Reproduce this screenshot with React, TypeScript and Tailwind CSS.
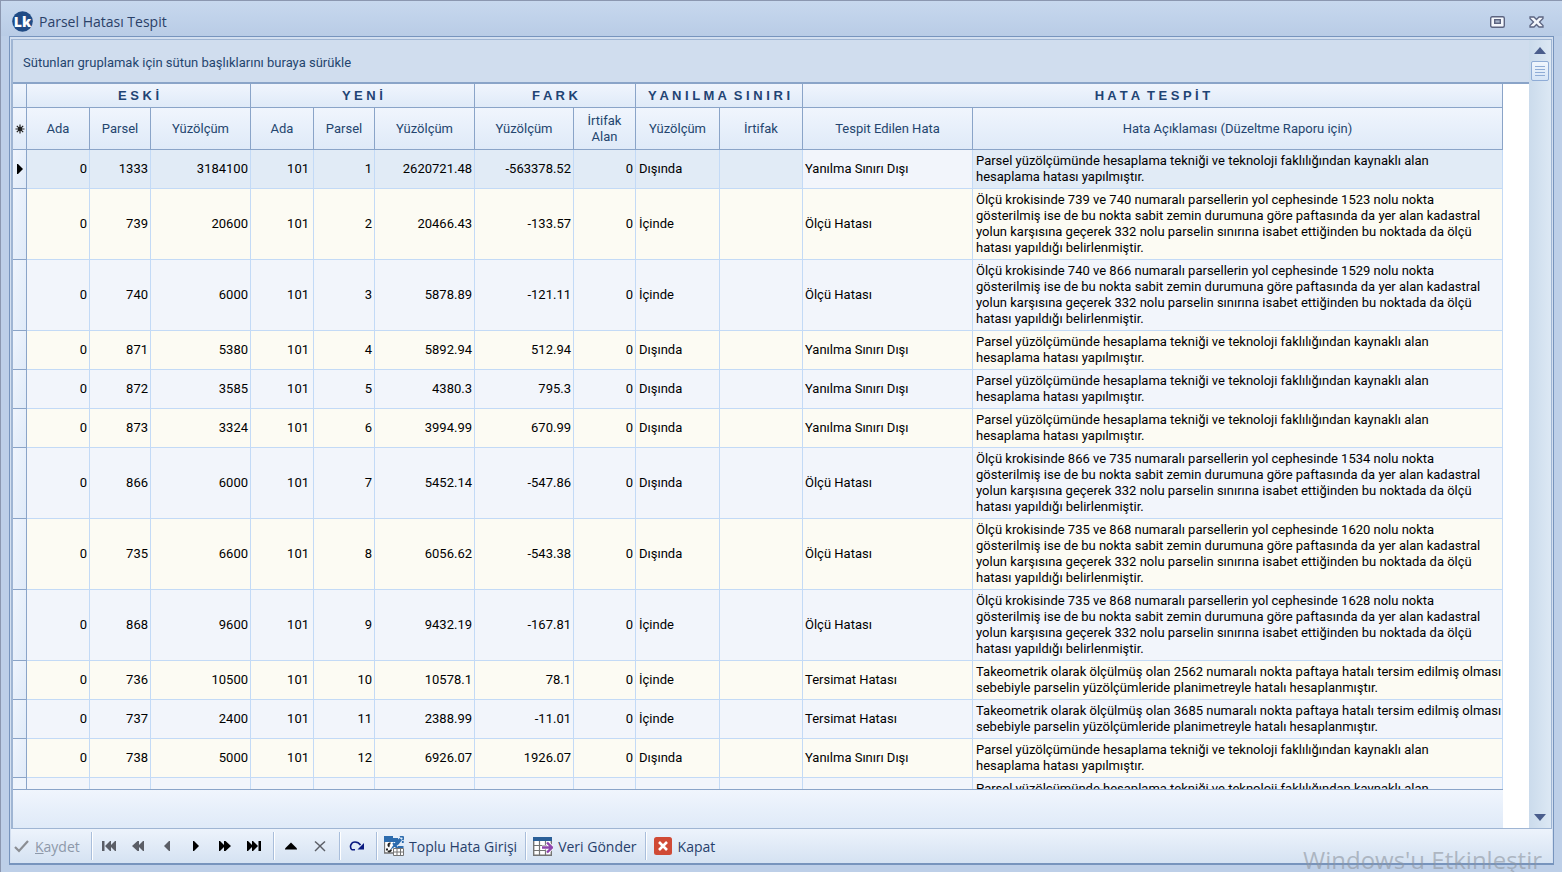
import type { ReactNode } from 'react'

type Row = {
  parsel: number
  alan: string
  yeniParsel: number
  yeniAlan: string
  fark: string
  sinir: string
  hata: string
  aciklama: string
}

const teknik =
  'Parsel yüzölçümünde hesaplama tekniği ve teknoloji faklılığından kaynaklı alan\nhesaplama hatası yapılmıştır.'

const olcu = (a: number, b: number, nokta: number) =>
  `Ölçü krokisinde ${a} ve ${b} numaralı parsellerin yol cephesinde ${nokta} nolu nokta\ngösterilmiş ise de bu nokta sabit zemin durumuna göre paftasında da yer alan kadastral\nyolun karşısına geçerek 332 nolu parselin sınırına isabet ettiğinden bu noktada da ölçü\nhatası yapıldığı belirlenmiştir.`

const tersimat = (nokta: number) =>
  `Takeometrik olarak ölçülmüş olan ${nokta} numaralı nokta paftaya hatalı tersim edilmiş olması\nsebebiyle parselin yüzölçümleride planimetreyle hatalı hesaplanmıştır.`

const rows: Row[] = [
  { parsel: 1333, alan: '3184100', yeniParsel: 1, yeniAlan: '2620721.48', fark: '-563378.52', sinir: 'Dışında', hata: 'Yanılma Sınırı Dışı', aciklama: teknik },
  { parsel: 739, alan: '20600', yeniParsel: 2, yeniAlan: '20466.43', fark: '-133.57', sinir: 'İçinde', hata: 'Ölçü Hatası', aciklama: olcu(739, 740, 1523) },
  { parsel: 740, alan: '6000', yeniParsel: 3, yeniAlan: '5878.89', fark: '-121.11', sinir: 'İçinde', hata: 'Ölçü Hatası', aciklama: olcu(740, 866, 1529) },
  { parsel: 871, alan: '5380', yeniParsel: 4, yeniAlan: '5892.94', fark: '512.94', sinir: 'Dışında', hata: 'Yanılma Sınırı Dışı', aciklama: teknik },
  { parsel: 872, alan: '3585', yeniParsel: 5, yeniAlan: '4380.3', fark: '795.3', sinir: 'Dışında', hata: 'Yanılma Sınırı Dışı', aciklama: teknik },
  { parsel: 873, alan: '3324', yeniParsel: 6, yeniAlan: '3994.99', fark: '670.99', sinir: 'Dışında', hata: 'Yanılma Sınırı Dışı', aciklama: teknik },
  { parsel: 866, alan: '6000', yeniParsel: 7, yeniAlan: '5452.14', fark: '-547.86', sinir: 'Dışında', hata: 'Ölçü Hatası', aciklama: olcu(866, 735, 1534) },
  { parsel: 735, alan: '6600', yeniParsel: 8, yeniAlan: '6056.62', fark: '-543.38', sinir: 'Dışında', hata: 'Ölçü Hatası', aciklama: olcu(735, 868, 1620) },
  { parsel: 868, alan: '9600', yeniParsel: 9, yeniAlan: '9432.19', fark: '-167.81', sinir: 'İçinde', hata: 'Ölçü Hatası', aciklama: olcu(735, 868, 1628) },
  { parsel: 736, alan: '10500', yeniParsel: 10, yeniAlan: '10578.1', fark: '78.1', sinir: 'İçinde', hata: 'Tersimat Hatası', aciklama: tersimat(2562) },
  { parsel: 737, alan: '2400', yeniParsel: 11, yeniAlan: '2388.99', fark: '-11.01', sinir: 'İçinde', hata: 'Tersimat Hatası', aciklama: tersimat(3685) },
  { parsel: 738, alan: '5000', yeniParsel: 12, yeniAlan: '6926.07', fark: '1926.07', sinir: 'Dışında', hata: 'Yanılma Sınırı Dışı', aciklama: teknik },
]

const columns = ['Ada', 'Parsel', 'Yüzölçüm', 'Ada', 'Parsel', 'Yüzölçüm', 'Yüzölçüm', 'İrtifak Alan', 'Yüzölçüm', 'İrtifak', 'Tespit Edilen Hata', 'Hata Açıklaması (Düzeltme Raporu için)']

const headCell = 'border-r border-b border-[#8aa4c8] bg-linear-to-b from-[#f0f5fd] to-[#dfeaf8]'
const cell = 'border-r border-b border-[#c3daf6]'

function Band({ span, children }: { span: number; children: ReactNode }) {
  return (
    <th colSpan={span} scope="colgroup" className={`${headCell} h-6 whitespace-pre text-[13px] leading-4 font-bold text-[#1f4474] [font-family:'Liberation_Sans',sans-serif]`}>
      {children}
    </th>
  )
}

function Grid() {
  return (
    <table className="w-full table-fixed border-separate border-spacing-0 text-[13px] leading-4 text-black">
      <colgroup>
        <col className="w-[14px]" />
        <col className="w-[63px]" />
        <col className="w-[61px]" />
        <col className="w-[100px]" />
        <col className="w-[63px]" />
        <col className="w-[61px]" />
        <col className="w-[100px]" />
        <col className="w-[99px]" />
        <col className="w-[62px]" />
        <col className="w-[84px]" />
        <col className="w-[83px]" />
        <col className="w-[170px]" />
        <col />
      </colgroup>
      <thead>
        <tr>
          <td className={headCell} />
          <Band span={3}>E S K İ</Band>
          <Band span={3}>Y E N İ</Band>
          <Band span={2}>F A R K</Band>
          <Band span={2}>{'Y A N I L M A  S I N I R I'}</Band>
          <Band span={2}>{'H A T A  T E S P İ T'}</Band>
        </tr>
        <tr>
          <td className={`${headCell} h-[42px]`}>
            <svg className="mx-auto block h-[10px] w-[10px]" viewBox="0 0 10 10" stroke="#222" strokeWidth="1.2">
              <path d="M5 .5v9M.5 5h9M1.8 1.8l6.4 6.4M8.2 1.8 1.8 8.2" />
              <circle cx="5" cy="5" r="1.6" fill="#222" />
            </svg>
          </td>
          {columns.map((name, i) => (
            <th key={i} scope="col" className={`${headCell} px-2 font-normal text-[#24456e]`}>
              {name}
            </th>
          ))}
        </tr>
      </thead>
      <tbody>
        {rows.map((row, i) => {
          const tone = i === 0 ? 'bg-[#e1ebf6]' : i % 2 ? 'bg-[#fcfbf3]' : 'bg-[#f2f5fb]'
          return (
            <tr key={row.parsel} className={tone}>
              <td className="border-r border-b border-[#8aa4c8] bg-linear-to-br from-[#f0f5fd] to-[#dfeaf8]">
                {i === 0 && (
                  <svg className="ml-1 block h-[10px] w-[6px]" viewBox="0 0 6 10">
                    <path d="M0 0h1l5 5-5 5H0z" fill="#000" />
                  </svg>
                )}
              </td>
              <td className={`${cell} pr-0.5 text-right`}>0</td>
              <td className={`${cell} pr-0.5 text-right`}>{row.parsel}</td>
              <td className={`${cell} pr-0.5 text-right`}>{row.alan}</td>
              <td className={`${cell} pr-1 text-right`}>101</td>
              <td className={`${cell} pr-0.5 text-right`}>{row.yeniParsel}</td>
              <td className={`${cell} pr-0.5 text-right`}>{row.yeniAlan}</td>
              <td className={`${cell} pr-0.5 text-right`}>{row.fark}</td>
              <td className={`${cell} pr-0.5 text-right`}>0</td>
              <td className={`${cell} pl-[3px]`}>{row.sinir}</td>
              <td className={cell} />
              <td className={`${cell} pl-0.5 ${i === 0 ? 'bg-[#f2f5fb]' : ''}`}>{row.hata}</td>
              <td className={`${cell} py-[3px] pl-[3px] whitespace-pre`}>{row.aciklama}</td>
            </tr>
          )
        })}
        <tr className="bg-[#f2f5fb]">
          <td className="border-r border-[#8aa4c8] bg-[#eef4fc]" />
          {columns.slice(1).map((_, i) => (
            <td key={i} className={cell} />
          ))}
          <td className={`${cell} py-[3px] pl-[3px] whitespace-pre`}>{teknik}</td>
        </tr>
      </tbody>
    </table>
  )
}

function Separator() {
  return <div className="mr-px ml-[5px] h-7 w-0.5 shrink-0 border-r border-l border-r-white border-l-[#a9bedb]" />
}

function NavButton({ label, color, children }: { label: string; color: string; children: ReactNode }) {
  return (
    <button type="button" aria-label={label} className={`flex h-7 w-[29px] items-center justify-center ${color}`}>
      <svg width="16" height="12" viewBox="0 0 16 12" fill="currentColor">
        {children}
      </svg>
    </button>
  )
}

function Toolbar() {
  return (
    <div className="flex h-[34px] shrink-0 items-center bg-linear-to-b from-[#edf3fc] to-[#d5e2f2] text-[14px] text-[#27406b]">
      <button type="button" disabled className="flex h-7 w-[75px] items-center gap-1.5 pl-[3px] text-[#8d98a9]">
        <svg width="15" height="13" viewBox="0 0 15 13" fill="none" stroke="#8b8e93" strokeWidth="2.2">
          <path d="M1 7l4 4 9-10" />
        </svg>
        <span><u>K</u>aydet</span>
      </button>
      <Separator />
      <NavButton label="İlk kayıt" color="text-[#5b5e66]">
        <path d="M15 1v10h-1l-4-4v4H9L4 6l5-5h1v4l4-4zM1 1h2.500v10H1z" />
      </NavButton>
      <NavButton label="Önceki sayfa" color="text-[#5b5e66]">
        <path d="M14 1v10h-1L9 7v4H7.500L2 6l5.500-5H9v4l4-4z" />
      </NavButton>
      <NavButton label="Önceki kayıt" color="text-[#5b5e66]">
        <path d="M11 1v10h-1L5 6l5-5z" />
      </NavButton>
      <NavButton label="Sonraki kayıt" color="text-black">
        <path d="M5 1v10h1l5-5-5-5z" />
      </NavButton>
      <NavButton label="Sonraki sayfa" color="text-black">
        <path d="M2 1v10h1l4-4v4h1.500L14 6 8.500 1H7v4L3 1z" />
      </NavButton>
      <NavButton label="Son kayıt" color="text-black">
        <path d="M1 1v10h1l4-4v4h1l5-5-5-5H6v4L2 1zM12.500 1h2.500v10h-2.500z" />
      </NavButton>
      <Separator />
      <NavButton label="Düzenle" color="text-black">
        <path d="M8 2.500 14 8.500v1H2v-1z" />
      </NavButton>
      <NavButton label="İptal" color="text-[#5b5e66]">
        <path d="M3.500 1 8 5l4.500-4 1 1L9 6l4.500 4.500-1 1L8 7l-4.500 4.500-1-1L7 6 2.500 2z" />
      </NavButton>
      <Separator />
      <NavButton label="Yenile" color="text-[#0b1a80]">
        <path d="M3 10C0 7 2 2 6 2c3 0 4.500 1.500 5.500 3" fill="none" stroke="currentColor" strokeWidth="1.6" />
        <path d="M15 3v6.500H8.500z" />
        <path d="M3 9h3v1.500H3z" />
      </NavButton>
      <Separator />
      <button type="button" className="flex h-7 items-center gap-[5px] pr-[3px] pl-[5px]">
        <svg width="20" height="20" viewBox="0 0 20 20">
          <path d="M.7 1.700V17H10" fill="#fff" stroke="#747474" strokeWidth="1.400" />
          <path d="M0 0h9v2h5v4H0z" fill="#2d6cae" />
          <path d="M1.400 6H11v10H1.400z" fill="#fff" />
          <path d="M6.500 7.500c-2-.5-3 2-1 3M3 12.500v2M4 15c1.500 1 3 0 3-1.500" fill="none" stroke="#222" strokeWidth="2" />
          <path d="m6 14 5.500-8 4-4 2.500 2-3.500 4.500L9 12z" fill="#2d6cae" />
          <path d="m9 7 6 7" stroke="#2d6cae" strokeWidth="2" />
          <path d="M16 1 18 0l2 2-1.500 2M18.800 5v2" fill="none" stroke="#2d6cae" strokeWidth="1.800" />
          <path d="M9.500 12.500h10v7h-10z" fill="#fff" stroke="#747474" />
          <path d="M9.500 16h10M13 12.500v7M16.500 12.500v7" stroke="#747474" />
          <path d="M14 10h5.500v2H14z" fill="#2d6cae" />
        </svg>
        Toplu Hata Girişi
      </button>
      <Separator />
      <button type="button" className="flex h-7 items-center gap-[5px] pr-[3px] pl-[5px]">
        <svg width="20" height="19" viewBox="0 0 20 19">
          <path d="M.7.7h17.600v17.600H.7z" fill="#fff" stroke="#747474" strokeWidth="1.400" />
          <path d="M0 0h19v4H0z" fill="#2a5f98" />
          <path d="M1 8.500h17M1 13.500h17M6.500 4v14M12.500 4v14" stroke="#747474" strokeWidth="1.200" />
          <path d="M9 10.500h9M14 5.500l5 5-5 5" fill="none" stroke="#fff" strokeWidth="4" />
          <path d="M9 10.500h9M14 5.500l5 5-5 5" fill="none" stroke="#8e44ad" strokeWidth="2.400" />
        </svg>
        Veri Gönder
      </button>
      <Separator />
      <button type="button" className="flex h-7 items-center gap-1.5 pr-[3px] pl-1.5">
        <svg width="18" height="18" viewBox="0 0 18 18">
          <rect width="18" height="18" rx="2.500" fill="#d04a35" />
          <path d="m5 5 8 8M13 5l-8 8" stroke="#fff" strokeWidth="2.600" />
        </svg>
        Kapat
      </button>
    </div>
  )
}

function ScrollBar() {
  return (
    <div className="flex w-[22px] shrink-0 flex-col items-center bg-linear-to-r from-[#cbdbec] to-[#dce8f4]">
      <button type="button" aria-label="Yukarı kaydır" className="flex h-[21px] w-full items-center justify-center">
        <svg width="12" height="7" viewBox="0 0 12 7"><path d="M6 0l6 7H0z" fill="#4a5d8c" /></svg>
      </button>
      <div className="flex h-5 w-[18px] flex-col items-center justify-center rounded-xs border border-[#8facd6] bg-linear-to-b from-[#f0f6fd] to-[#d5e4f6]">
        <svg width="10" height="10" viewBox="0 0 10 10"><path d="M0 .5h10M0 3.500h10M0 6.500h10M0 9.500h10" stroke="#8facd6" /></svg>
      </div>
      <button type="button" aria-label="Aşağı kaydır" className="mt-auto flex h-[22px] w-full items-center justify-center">
        <svg width="12" height="7" viewBox="0 0 12 7"><path d="M6 7l6-7H0z" fill="#4a5d8c" /></svg>
      </button>
    </div>
  )
}

export default function App() {
  return (
    <div className="relative flex h-screen flex-col overflow-hidden border-t border-l border-[#8b97b0] bg-[#bdcfe8] px-2 pb-[7px] [font-family:'Open_Sans',sans-serif]">
      {/* Title bar */}
      <header className="-mx-2 flex h-[35px] shrink-0 items-center bg-linear-to-b from-[#c7d8ee] to-[#b9cce6] pt-1.5 pr-[18px] pl-[11px]">
        <svg width="21" height="21" viewBox="0 0 21 21" className="shrink-0">
          <circle cx="10.500" cy="10.500" r="10.300" fill="#204b85" />
          <text x="10.500" y="15.500" textAnchor="middle" fontSize="14" fontWeight="800" fill="#fff">Lk</text>
        </svg>
        <h1 className="ml-1.5 text-[14px] leading-5 text-[#2b4168]">Parsel Hatası Tespit</h1>
        <div className="ml-auto flex items-center gap-6">
          <button type="button" aria-label="Ekranı kapla">
            <svg width="15" height="12" viewBox="0 0 15 12" fill="#f4f7fc" stroke="#5c6480">
              <rect x=".7" y=".7" width="13.600" height="10.600" rx="1.500" strokeWidth="1.400" />
              <rect x="4.700" y="3.700" width="5.600" height="3.600" fill="#a9b5cb" strokeWidth="1.400" />
            </svg>
          </button>
          <button type="button" aria-label="Kapat">
            <svg width="15" height="12" viewBox="0 0 15 12">
              <path d="M1 1h4l2.500 2.500L10 1h4v1.500L10.500 6 14 9.500V11h-4L7.500 8.500 5 11H1V9.500L4.500 6 1 2.500z" fill="#f4f7fc" stroke="#5c6480" strokeWidth="1.300" />
            </svg>
          </button>
        </div>
      </header>

      <div className="flex min-h-0 flex-1 flex-col border border-b-2 border-[#7794bd] bg-[#d3dff0] px-px pt-0.5">
        <div className="flex min-h-0 flex-1 border border-l-2 border-[#9fb5d3] bg-white">
          <main className="flex min-w-0 flex-1 flex-col [font-family:Roboto,sans-serif]">
            <div className="flex h-11 shrink-0 items-center border-b-2 border-[#8aa4c8] bg-[#d0ddee] pt-1 pl-2.5 text-[13px] text-[#24456e]">
              Sütunları gruplamak için sütun başlıklarını buraya sürükle
            </div>
            <div className="mr-[26px] min-h-0 flex-1 overflow-hidden">
              <Grid />
            </div>
            <div className="mr-[26px] h-[39px] shrink-0 border-t border-[#8aa4c8] bg-linear-to-b from-[#f0f5fd] to-[#dfeaf8]" />
          </main>
          <ScrollBar />
        </div>
        <Toolbar />
      </div>

      {/* Windows activation watermark, cut off by the screen edge */}
      <div className="pointer-events-none absolute right-5 -bottom-1 text-[24px] leading-8 text-[#8e959f]/60">
        Windows'u Etkinleştir
      </div>
    </div>
  )
}
